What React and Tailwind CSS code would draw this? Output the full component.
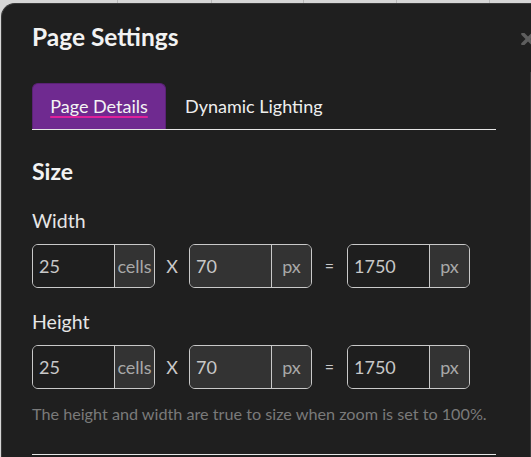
import React from "react";

function Group({ value, unit, disabled }) {
  return (
    <div className="flex h-[44px] w-[123px] rounded-[6px] border border-[#c9c9c9] overflow-hidden">
      <div className={`flex-1 flex items-center pl-[6px] text-[18px] text-[#c8c8c8] ${disabled ? "bg-[#333333]" : "bg-[#1e1e1e]"}`}>
        {value}
      </div>
      <div className="w-[40px] flex items-center justify-center border-l border-[#c9c9c9] bg-[#333333] text-[18px] text-[#a8a8a8]">
        {unit}
      </div>
    </div>
  );
}

function Row({ a, b, c }) {
  return (
    <div className="flex items-center">
      <Group value={a} unit="cells" />
      <div className="w-[34px] text-center text-[18px] text-[#c8c8c8]">X</div>
      <Group value={b} unit="px" disabled />
      <div className="w-[35px] text-center text-[16px] text-[#c8c8c8]">=</div>
      <Group value={c} unit="px" />
    </div>
  );
}

export default function App() {
  return (
    <div
      className="w-[531px] h-[457px] overflow-hidden bg-[#d6d6d6] relative"
      style={{ fontFamily: "Lato, 'Open Sans', sans-serif" }}
    >
      <div className="absolute top-0 left-0 w-full h-[3px] flex">
        <div className="w-[118px] border-r border-[#b8b8b8]" />
        <div className="w-[94px] border-r border-[#b8b8b8]" />
        <div className="w-[92px] border-r border-[#b8b8b8]" />
        <div className="w-[93px] border-r border-[#b8b8b8]" />
        <div className="w-[93px] border-r border-[#b8b8b8]" />
      </div>
      <div className="ml-[1px] mt-[3px] h-[470px] rounded-tl-[14px] bg-[#1f1f1f] border-l border-t border-[#3a3a3a] relative">
        <svg className="absolute right-[-4px] top-[29px]" width="14" height="12" viewBox="0 0 14 12">
          <path d="M2 1 L12 11 M12 1 L2 11" stroke="#5e5e5e" strokeWidth="3.5" strokeLinecap="round" />
        </svg>
        <div className="absolute right-0 top-[68px] bottom-0 w-[1px] bg-[#3a3a3a]" />
        <div className="pl-[30px] pr-[35px]">
          <h1 className="pt-[17px] text-[24.5px] font-bold text-[#f2f2f2] leading-[32px]">Page Settings</h1>
          <div className="mt-[30px] flex items-end border-b border-[#e6e6e6]">
            <div className="h-[46px] w-[134px] rounded-t-[6px] bg-[#6f2a90] border border-[#5a2275] border-b-0 flex items-center justify-center text-[18px] text-[#f4f4f4]">
              <span className="underline decoration-[#e0209a] decoration-[2px] underline-offset-[3px]">Page Details</span>
            </div>
            <div className="h-[46px] flex items-center pl-[19px] text-[18px] text-[#eeeeee]">Dynamic Lighting</div>
          </div>
          <div className="mt-[28px] text-[23px] font-bold text-[#f2f2f2] leading-[26px]">Size</div>
          <div className="mt-[25px] text-[19.5px] text-[#e6e6e6] leading-[24px]">Width</div>
          <div className="mt-[11px]"><Row a="25" b="70" c="1750" /></div>
          <div className="mt-[22px] text-[19.5px] text-[#e6e6e6] leading-[24px]">Height</div>
          <div className="mt-[11px]"><Row a="25" b="70" c="1750" /></div>
          <div className="mt-[14px] text-[16.2px] text-[#7a7a7a] leading-[22px]">The height and width are true to size when zoom is set to 100%.</div>
          <div className="mt-[29px] border-b border-[#e6e6e6]" />
        </div>
      </div>
    </div>
  );
}
